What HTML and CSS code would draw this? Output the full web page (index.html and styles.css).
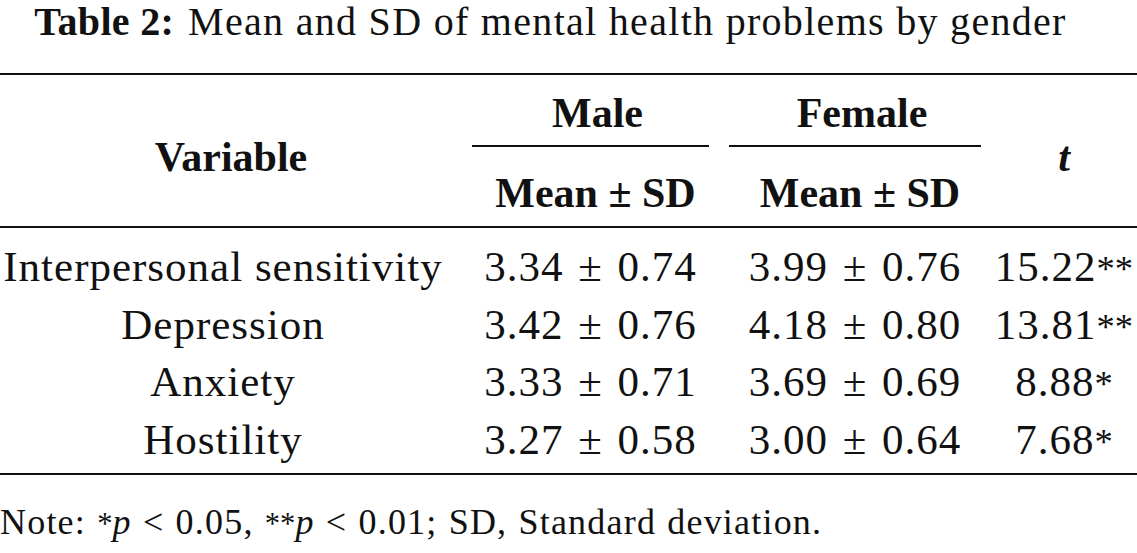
FILE: index.html
```html
<!DOCTYPE html>
<html lang="en">
<head>
<meta charset="utf-8">
<title>Table 2</title>
<link rel="stylesheet" href="styles.css">
</head>
<body>
<div class="page">
  <div class="caption"><span class="cap-label">Table 2:</span>Mean and SD of mental health problems by gender</div>
  <table class="data">
    <colgroup>
      <col class="c-var">
      <col class="c-male">
      <col class="c-female">
      <col class="c-t">
    </colgroup>
    <thead>
      <tr class="h1">
        <th rowspan="2" class="span2">Variable</th>
        <th><div class="grp">Male</div></th>
        <th><div class="grp">Female</div></th>
        <th rowspan="2" class="span2"><i>t</i></th>
      </tr>
      <tr class="h2">
        <th>Mean ± SD</th>
        <th>Mean ± SD</th>
      </tr>
    </thead>
    <tbody>
      <tr class="first">
        <td class="var">Interpersonal sensitivity</td>
        <td class="num">3.34 ± 0.74</td>
        <td class="num">3.99 ± 0.76</td>
        <td class="num">15.22<span class="ast">**</span></td>
      </tr>
      <tr>
        <td class="var">Depression</td>
        <td class="num">3.42 ± 0.76</td>
        <td class="num">4.18 ± 0.80</td>
        <td class="num">13.81<span class="ast">**</span></td>
      </tr>
      <tr>
        <td class="var">Anxiety</td>
        <td class="num">3.33 ± 0.71</td>
        <td class="num">3.69 ± 0.69</td>
        <td class="num">8.88<span class="ast">*</span></td>
      </tr>
      <tr class="last">
        <td class="var">Hostility</td>
        <td class="num">3.27 ± 0.58</td>
        <td class="num">3.00 ± 0.64</td>
        <td class="num">7.68<span class="ast">*</span></td>
      </tr>
    </tbody>
  </table>
  <div class="note">Note: <span class="ast">*</span><i>p</i> &lt; 0.05, <span class="ast">**</span><i>p</i> &lt; 0.01; SD, Standard deviation.</div>
</div>
</body>
</html>
```
FILE: styles.css
```css
html, body {
  margin: 0;
  padding: 0;
  background: #ffffff;
}

body {
  font-family: "Liberation Serif", "Times New Roman", serif;
  color: #111111;
}

.page {
  width: 1137px;
}

.caption {
  font-size: 40px;
  line-height: 44px;
  letter-spacing: 1.3px;
  height: 73px;
  box-sizing: border-box;
  text-align: center;
  padding-right: 36px;
  white-space: nowrap;
}

.cap-label {
  font-weight: bold;
  letter-spacing: 0.3px;
  margin-right: 14px;
}

.data {
  width: 1137px;
  table-layout: fixed;
  border-collapse: collapse;
  border-top: 2.5px solid #111;
  border-bottom: 2.5px solid #111;
}

.c-var { width: 462px; }
.c-male { width: 257px; }
.c-female { width: 272px; }
.c-t { width: 146px; }

.data th {
  font-weight: bold;
  font-size: 42px;
  line-height: 50px;
  padding: 0;
  text-align: center;
}

.data th.span2 {
  vertical-align: middle;
}

.h1 th {
  padding-top: 13px;
}

.grp {
  margin: 0 10px;
  padding-bottom: 7px;
  border-bottom: 2px solid #111;
  padding-left: 14px;
}

.h2 th {
  padding-top: 21px;
  padding-bottom: 8px;
  padding-left: 10px;
}

thead {
  border-bottom: 2px solid #111;
}

.data td {
  font-size: 43px;
  line-height: 57.5px;
  padding: 0;
  text-align: center;
  white-space: nowrap;
  letter-spacing: 1px;
}

.data td.num {
  word-spacing: 3px;
}

.data td.var {
  padding-right: 16px;
}

.data tr.first td {
  padding-top: 10px;
}

.data tr.last td {
  padding-bottom: 5px;
}

.ast {
  font-size: 0.85em;
  line-height: 1;
  letter-spacing: 0;
}

.note {
  font-size: 36px;
  line-height: 40px;
  letter-spacing: 1.2px;
  word-spacing: 1px;
  padding-top: 27px;
  white-space: nowrap;
}
```
